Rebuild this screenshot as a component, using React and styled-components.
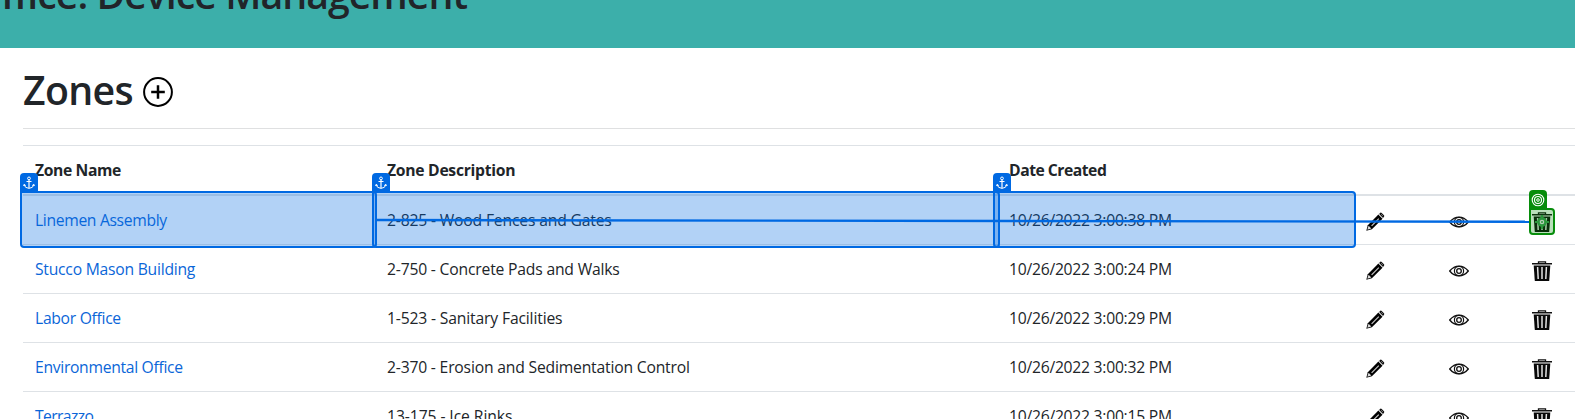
import React from 'react';
import styled, { createGlobalStyle } from 'styled-components';

const BLUE = '#0069e2';
const GREEN = '#078d0b';

const GlobalStyle = createGlobalStyle`
  * { box-sizing: border-box; }
  body {
    margin: 0;
    background: #fff;
    color: #212529;
    font-family: 'Segoe UI', 'Open Sans', 'Noto Sans', sans-serif;
    font-size: 15.7px;
    overflow: hidden;
  }
`;

const Page = styled.div`
  position: relative;
  height: 419px;
  overflow: hidden;
`;

const Banner = styled.header`
  display: flex;
  align-items: flex-end;
  height: 48px;
  padding-bottom: 30px;
  background: #3cafaa;
  overflow: hidden;
`;

const BannerTitle = styled.h1`
  flex: none;
  width: 467px;
  margin: 0;
  display: flex;
  justify-content: flex-end;
  font-size: 39.3px;
  font-weight: 540;
  line-height: 48px;
  letter-spacing: -1px;
  white-space: nowrap;
`;

const Content = styled.main`
  padding-left: 23px;
`;

const TitleRow = styled.div`
  display: flex;
  align-items: center;
  gap: 12px;
  height: 80px;
  padding-top: 7px;
`;

const Title = styled.h2`
  width: 108px;
  margin: 0;
  padding-bottom: 4px;
  font-size: 39.3px;
  font-weight: 540;
  line-height: 48px;
  letter-spacing: -0.7px;
  white-space: nowrap;
`;

const Rule = styled.hr`
  height: 1px;
  margin: 0 0 16px;
  border: 0;
  background: #dfe0e1;
`;

const Table = styled.div`
  border-top: 1px solid #dee2e6;
`;

const Row = styled.div`
  display: grid;
  grid-template-columns: 352px 622px 357px 83px 83px 83px;
  height: ${(p) => (p.$head ? 50 : 49)}px;
  padding-top: 12px;
  line-height: 25px;
  font-weight: ${(p) => (p.$head ? 700 : 400)};
  border-bottom: ${(p) => (p.$head ? 2 : 1)}px solid #dee2e6;
`;

const Cell = styled.div`
  padding-left: 12px;
  letter-spacing: ${(p) => p.$track || 0}px;
  white-space: nowrap;
  color: ${(p) => (p.$link ? '#0b66d8' : 'inherit')};
  svg { display: block; margin-top: 4px; }
`;

const Highlight = styled.div`
  position: absolute;
  left: ${(p) => p.$x}px;
  top: ${(p) => p.$y}px;
  width: ${(p) => p.$w}px;
  height: ${(p) => p.$h}px;
  border: 2px solid ${(p) => p.$color};
  border-radius: 0 4px 4px 4px;
  background: ${(p) => p.$fill};
  display: grid;
  place-items: center;
`;

const Badge = styled.div`
  position: absolute;
  left: -2px;
  top: -20px;
  width: 18px;
  height: 19px;
  border-radius: 4px 4px 0 0;
  background: ${(p) => p.$color};
  display: grid;
  place-items: center;
`;

const Connector = styled.svg`
  position: absolute;
  left: 377px;
  top: 215px;
`;

const PlusIcon = () => (
  <svg width="30" height="30" viewBox="0 0 30 30" fill="none" stroke="#000">
    <circle cx="15" cy="15" r="13.9" strokeWidth="2" />
    <path d="M15 8.2v13.6M8.2 15h13.6" strokeWidth="2.5" />
  </svg>
);

const PencilIcon = () => (
  <svg width="20" height="20" viewBox="0 0 20 20">
    <path d="M0.3 18.8 1.8 13.2 12.4 2.6 16.5 6.7 5.9 17.3Z" fill="#000" />
    <path d="M1.3 17.8 2.6 13.8 5.3 16.5Z" fill="#ddd" />
    <path d="M5.6 13.8 12.8 6.6" stroke="#ccc" strokeWidth="1.1" />
    <path d="M13.1 1.9 14.3 .8Q15 .3 15.7 1L18 3.3Q18.6 4 18 4.7L17 5.9Z" fill="#111" />
    <path d="M12.4 2.3 16.8 6.7" stroke="#bbb" strokeWidth="0.9" />
    <path d="M15.2 2.3 16.8 3.9" stroke="#999" strokeWidth="0.9" />
  </svg>
);

const EyeIcon = () => (
  <svg width="20" height="20" viewBox="0 0 20 20" fill="none" stroke="#111">
    <path d="M.7 10Q4.7 5.1 10 5.1T19.3 10Q15.3 14.9 10 14.9T.7 10Z" strokeWidth="1.4" />
    <circle cx="10" cy="10" r="4.6" strokeWidth="1.2" />
    <circle cx="10" cy="10" r="2.3" strokeWidth="1.3" />
  </svg>
);

const TrashIcon = () => (
  <svg width="20" height="20" viewBox="0 0 20 20">
    <path d="M6.5 2.2V.9h7v1.3" fill="none" stroke="#111" strokeWidth="1.3" />
    <path d="M0 2h20v1.5H0Z" fill="#111" />
    <path d="M1.7 4.4H18.3L17.2 20H2.8Z" fill="#090909" />
    <path d="M5.6 6 6.2 18M10 6V18M14.4 6 13.8 18" stroke="#e4e4e4" strokeWidth="1.5" />
  </svg>
);

const AnchorIcon = () => (
  <svg width="12" height="14" viewBox="0 0 12 14" fill="none" stroke="#fff">
    <circle cx="6" cy="2.4" r="1.4" strokeWidth="1" />
    <path d="M6 3.8V12M3.5 5.5h5" strokeWidth="1.2" />
    <path d="M1.2 8.8Q1.7 12 6 12.4 10.3 12 10.8 8.8M.6 10 1.2 8.3 2.8 9.6M11.4 10 10.8 8.3 9.2 9.6" strokeWidth="1" />
  </svg>
);

const TargetIcon = () => (
  <svg width="14" height="14" viewBox="0 0 14 14" fill="none" stroke="#fff">
    <circle cx="7" cy="7" r="5.8" strokeWidth="1.1" />
    <circle cx="7" cy="7" r="3.5" strokeWidth="1.1" />
    <circle cx="7" cy="7" r="1.3" strokeWidth="1" />
  </svg>
);

const CrosshairIcon = () => (
  <svg width="16" height="16" viewBox="0 0 16 16" fill="none" stroke="#2b963c">
    <circle cx="8" cy="8" r="3.6" fill="#b4cdb6" strokeWidth="2.6" />
    <path d="M8 1v3M8 12v3M1 8h3M12 8h3" strokeWidth="2.2" />
    <circle cx="8" cy="8" r="1" fill="#2b963c" stroke="none" />
  </svg>
);

const headings = [
  { text: 'Zone Name', track: -0.38 },
  { text: 'Zone Description', track: -0.28 },
  { text: 'Date Created', track: -0.48 },
];

const zones = [
  {
    name: { text: 'Linemen Assembly', track: -0.34 },
    description: { text: '2-825 - Wood Fences and Gates', track: -0.17 },
    created: '10/26/2022 3:00:38 PM',
  },
  {
    name: { text: 'Stucco Mason Building', track: -0.24 },
    description: { text: '2-750 - Concrete Pads and Walks', track: -0.19 },
    created: '10/26/2022 3:00:24 PM',
  },
  {
    name: { text: 'Labor Office', track: -0.3 },
    description: { text: '1-523 - Sanitary Facilities', track: -0.16 },
    created: '10/26/2022 3:00:29 PM',
  },
  {
    name: { text: 'Environmental Office', track: -0.31 },
    description: { text: '2-370 - Erosion and Sedimentation Control', track: -0.19 },
    created: '10/26/2022 3:00:32 PM',
  },
  {
    name: { text: 'Terrazzo', track: -0.6 },
    description: { text: '13-175 - Ice Rinks', track: -0.08 },
    created: '10/26/2022 3:00:15 PM',
  },
];

const anchors = [
  { x: 20, w: 357 },
  { x: 372, w: 628 },
  { x: 993, w: 363 },
];

export default function App() {
  return (
    <Page>
      <GlobalStyle />
      <Banner>
        <BannerTitle>Office: Device Management</BannerTitle>
      </Banner>
      <Content>
        <TitleRow>
          <Title>Zones</Title>
          <PlusIcon />
        </TitleRow>
        <Rule />
        <Table>
          <Row $head>
            {headings.map(({ text, track }) => (
              <Cell key={text} $track={track}>{text}</Cell>
            ))}
          </Row>
          {zones.map(({ name, description, created }) => (
            <Row key={name.text}>
              <Cell $link $track={name.track}>{name.text}</Cell>
              <Cell $track={description.track}>{description.text}</Cell>
              <Cell $track={-0.25}>{created}</Cell>
              <Cell><PencilIcon /></Cell>
              <Cell><EyeIcon /></Cell>
              <Cell><TrashIcon /></Cell>
            </Row>
          ))}
        </Table>
      </Content>
      {anchors.map(({ x, w }) => (
        <Highlight key={x} $x={x} $y={191} $w={w} $h={57} $color={BLUE} $fill="rgba(0, 105, 226, 0.3)">
          <Badge $color={BLUE}><AnchorIcon /></Badge>
        </Highlight>
      ))}
      <Connector width="1153" height="12">
        <path d="M0 5 1153 6.8" stroke={BLUE} strokeWidth="2.4" />
      </Connector>
      <Highlight $x={1529} $y={208} $w={26} $h={27} $color={GREEN} $fill="rgba(7, 141, 11, 0.28)">
        <Badge $color={GREEN}><TargetIcon /></Badge>
        <CrosshairIcon />
      </Highlight>
    </Page>
  );
}
